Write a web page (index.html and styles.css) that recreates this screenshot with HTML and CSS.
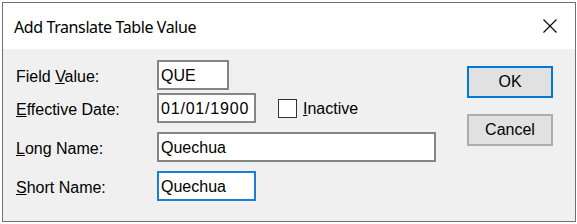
FILE: index.html
```html
<!DOCTYPE html>
<html lang="en">
<head>
    <meta charset="UTF-8">
    <meta name="viewport" content="width=device-width, initial-scale=1.0">
    <title>Add Translate Table Value</title>
    <link rel="stylesheet" href="styles.css">
</head>
<body>

    <div class="dialog">
        <div class="titlebar">
            <span class="title">Add Translate Table Value</span>
            <svg class="close" width="14" height="14" viewBox="0 0 14 14">
                <path d="M0.5 0.5 L13.5 13.5 M13.5 0.5 L0.5 13.5" stroke="#000" stroke-width="1.1" fill="none"/>
            </svg>
        </div>

        <div class="dialog-body">
            <div class="form">
                <div class="row row-field">
                    <label class="label">Field <u>V</u>alue:</label>
                    <input class="text field-value" type="text" value="QUE">
                </div>
                <div class="row row-date">
                    <label class="label"><u>E</u>ffective Date:</label>
                    <input class="text date" type="text" value="01/01/1900">
                    <label class="check">
                        <input type="checkbox" class="box">
                        <span><u>I</u>nactive</span>
                    </label>
                </div>
                <div class="row row-long">
                    <label class="label"><u>L</u>ong Name:</label>
                    <input class="text long" type="text" value="Quechua">
                </div>
                <div class="row row-short">
                    <label class="label"><u>S</u>hort Name:</label>
                    <input class="text short focused" type="text" value="Quechua">
                </div>
            </div>

            <div class="buttons">
                <button class="btn default">OK</button>
                <button class="btn">Cancel</button>
            </div>
        </div>
    </div>

</body>
</html>
```

FILE: styles.css
```css
body {
    margin: 0;
    background-color: #ffffff;
    font-family: "Liberation Sans", Arial, sans-serif;
    font-size: 16px;
    color: #000;
}

.dialog {
    margin: 2px 0 0 2px;
    width: 572px;
    height: 218px;
    border: 1px solid #707070;
    display: flex;
    flex-direction: column;
}

.titlebar {
    height: 46px;
    background-color: #fff;
    display: flex;
    align-items: center;
    justify-content: space-between;
    padding: 0 18px 0 11px;
}

.title {
    font-family: "Noto Sans", "Open Sans", sans-serif;
    font-size: 16px;
    letter-spacing: -0.4px;
    padding-top: 1px;
}

.close {
    display: block;
}

.dialog-body {
    flex: 1;
    background-color: #f0f0f0;
    display: flex;
}

.form {
    padding: 11px 0 0 13px;
}

.row {
    display: flex;
    align-items: center;
    height: 30px;
}

.row-date {
    margin-top: 3px;
}

.row-long,
.row-short {
    margin-top: 9px;
}

.label {
    width: 141px;
    padding-top: 3px;
}

.text {
    box-sizing: border-box;
    height: 30px;
    border: 2px solid #858585;
    background-color: #fff;
    padding: 1px 2px 0 2px;
    font-family: "Liberation Sans", Arial, sans-serif;
    font-size: 16px;
    color: #000;
    outline: none;
}

.field-value {
    width: 72px;
}

.date {
    width: 99px;
    letter-spacing: 0.8px;
}

.long {
    width: 279px;
}

.short {
    width: 99px;
}

.text.focused {
    border-color: #1a7ed6;
}

.check {
    display: flex;
    align-items: center;
    margin-left: 22px;
    padding-top: 1px;
}

.box {
    appearance: none;
    margin: 0 6px 0 0;
    width: 19px;
    height: 19px;
    border: 1px solid #333;
    background-color: #fff;
}

.buttons {
    margin-left: auto;
    margin-right: 22px;
    padding-top: 17px;
    display: flex;
    flex-direction: column;
    gap: 16px;
}

.btn {
    width: 86px;
    height: 32px;
    box-sizing: border-box;
    background-color: #e1e1e1;
    border: 2px solid #adadad;
    font-family: "Liberation Sans", Arial, sans-serif;
    font-size: 16px;
    color: #000;
    padding: 0;
}

.btn.default {
    border-color: #0078d7;
}
```
